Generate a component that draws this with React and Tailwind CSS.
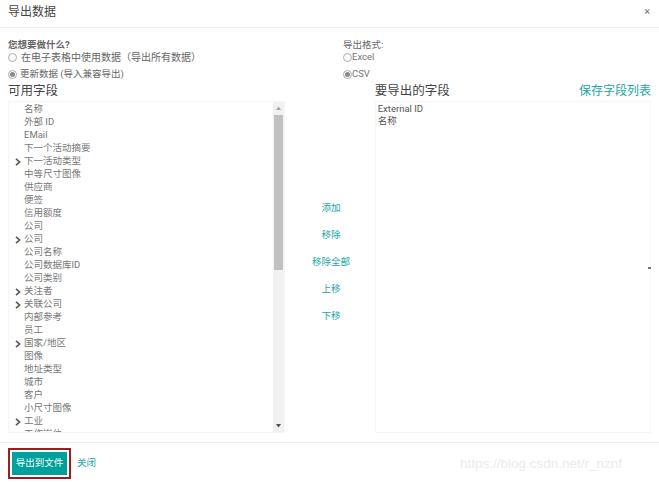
import React from "react";

const fields = [
  { name: "名称" },
  { name: "外部 ID" },
  { name: "EMail" },
  { name: "下一个活动摘要" },
  { name: "下一活动类型", sub: true },
  { name: "中等尺寸图像" },
  { name: "供应商" },
  { name: "便签" },
  { name: "信用额度" },
  { name: "公司" },
  { name: "公司", sub: true },
  { name: "公司名称" },
  { name: "公司数据库ID" },
  { name: "公司类别" },
  { name: "关注者", sub: true },
  { name: "关联公司", sub: true },
  { name: "内部参考" },
  { name: "员工" },
  { name: "国家/地区", sub: true },
  { name: "图像" },
  { name: "地址类型" },
  { name: "城市" },
  { name: "客户" },
  { name: "小尺寸图像" },
  { name: "工业", sub: true },
  { name: "工作岗位" },
];

const actions = ["添加", "移除", "移除全部", "上移", "下移"];

const Radio = ({ checked }) => (
  <span className="inline-flex items-center justify-center w-[9px] h-[9px] rounded-full border border-[#aaa] bg-white shrink-0">
    {checked && <span className="w-[5px] h-[5px] rounded-full bg-[#888]" />}
  </span>
);

const Chevron = () => (
  <svg width="6" height="8" viewBox="0 0 6 8" className="shrink-0">
    <path d="M1 0.8 L4.6 4 L1 7.2" fill="none" stroke="#555" strokeWidth="1.6" />
  </svg>
);

const App = () => {
  return (
    <div
      className="relative w-[659px] h-[485px] bg-white flex flex-col overflow-hidden"
      style={{ fontFamily: 'Roboto, "Noto Sans CJK SC", sans-serif' }}
    >
      {/* header */}
      <div className="h-[28px] px-[8px] flex items-center justify-between border-b border-[#f0f0f0]">
        <span className="text-[12px] text-[#444] leading-none -mt-[3px]">导出数据</span>
        <span className="text-[11px] text-[#777] leading-none -mt-[4px] mr-[1px]">×</span>
      </div>

      {/* options */}
      <div className="flex px-[8px] pt-[10px]">
        <div className="w-[335px] flex flex-col">
          <div className="h-[13px] leading-[13px] text-[9.5px] font-bold text-[#666]">您想要做什么?</div>
          <label className="h-[13px] flex items-center gap-[4px] text-[10px] text-[#666]">
            <Radio />
            <span>在电子表格中使用数据（导出所有数据）</span>
          </label>
          <label className="h-[13px] mt-[4px] flex items-center gap-[3px] text-[9.5px] text-[#666]">
            <Radio checked />
            <span>更新数据 (导入兼容导出)</span>
          </label>
        </div>
        <div className="flex flex-col">
          <div className="h-[13px] leading-[13px] text-[9.5px] text-[#666]">导出格式:</div>
          <label className="h-[13px] flex items-center text-[9.5px] text-[#777]">
            <Radio />
            <span>Excel</span>
          </label>
          <label className="h-[13px] mt-[4px] flex items-center text-[9.5px] text-[#777]">
            <Radio checked />
            <span>CSV</span>
          </label>
        </div>
      </div>

      {/* fields */}
      <div className="flex px-[8px] mt-[2px]">
        <div className="w-[279px] flex flex-col">
          <div className="h-[16px] leading-[16px] text-[12.5px] text-[#444]">可用字段</div>
          <div className="mt-[2px] h-[332px] border border-[#f6f6f6] flex overflow-hidden">
            <ul className="flex-1 pt-[1px] text-[9.5px] text-[#777]">
              {fields.map((f, i) => (
                <li key={i} className="h-[13px] flex items-center">
                  <span className="w-[15px] flex justify-center pl-[2px]">{f.sub && <Chevron />}</span>
                  <span>{f.name}</span>
                </li>
              ))}
            </ul>
            <div className="w-[11px] bg-[#f1f1f1] flex flex-col items-center">
              <div className="h-[12px] flex items-center justify-center">
                <svg width="5" height="4" viewBox="0 0 5 4">
                  <path d="M0 4 L2.5 0.5 L5 4 Z" fill="#a3a3a3" />
                </svg>
              </div>
              <div className="w-[9px] h-[155px] bg-[#c1c1c1] mt-[1px]" />
              <div className="flex-1" />
              <div className="h-[12px] flex items-center justify-center">
                <svg width="5" height="4" viewBox="0 0 5 4">
                  <path d="M0 0 L5 0 L2.5 3.5 Z" fill="#505050" />
                </svg>
              </div>
            </div>
          </div>
        </div>

        <div className="w-[90px] flex flex-col">
          <div className="h-[18px]" />
          <div className="pt-[94px] pl-[2px] flex flex-col items-center">
            {actions.map((a) => (
              <button
                key={a}
                className="h-[27px] flex items-center text-[9.5px] text-[#1aa7a4]"
              >
                {a}
              </button>
            ))}
          </div>
        </div>

        <div className="w-[278px] flex flex-col">
          <div className="h-[16px] flex items-center justify-between">
            <span className="text-[12.5px] text-[#444]">要导出的字段</span>
            <span className="text-[12px] text-[#1aa7a4]">保存字段列表</span>
          </div>
          <div className="mt-[2px] h-[332px] border border-[#f6f6f6] relative">
            <div className="pt-[1px] pl-[2px] text-[9.5px] text-[#555] leading-[12px]">
              <div>External ID</div>
              <div>名称</div>
            </div>
            <span className="absolute -right-[1px] top-[165px] w-[3px] h-[2px] bg-[#777]" />
          </div>
        </div>
      </div>

      {/* footer */}
      <div className="mt-[9px] border-t border-[#ececec] flex-1 flex items-center px-[8px] gap-[6px]">
        <div className="border-[2px] border-[#a11a1d] p-[2px] -mt-[2px]">
          <button className="w-[55px] h-[23px] bg-[#00a09d] text-white text-[9.5px] flex items-center justify-center">
            导出到文件
          </button>
        </div>
        <button className="text-[9.5px] text-[#1aa7a4] -mt-[2px]">关闭</button>
      </div>

      <span
        className="absolute left-[460px] top-[457px] text-[13.5px] text-[#ebebeb] leading-none"
        style={{ fontFamily: '"Liberation Sans", Arial, sans-serif' }}
      >
        https://blog.csdn.net/r_nznf
      </span>
    </div>
  );
};

export default App;
